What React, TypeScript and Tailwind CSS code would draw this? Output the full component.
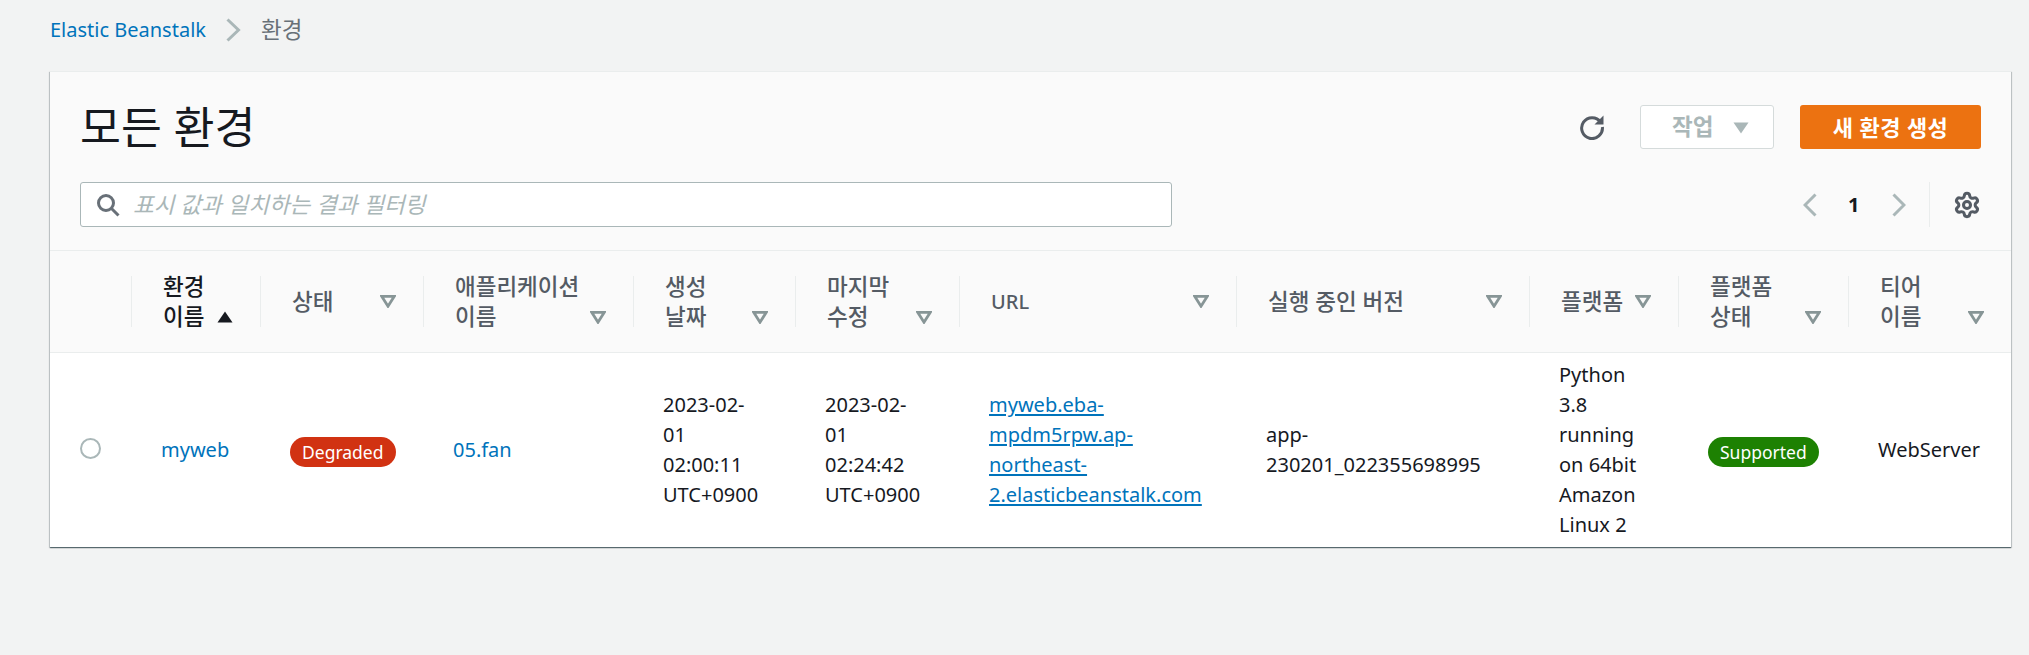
import React from "react";
import { Settings } from "lucide-react";

const FONT = "font-['Noto_Sans','Noto_Sans_CJK_KR',sans-serif]";

function FilterCaret() {
  return (
    <svg width="16" height="13" viewBox="0 0 16 13" className="shrink-0">
      <path d="M1.8 1.4H14.2L8 11.2Z" fill="none" stroke="#879596" strokeWidth="2.8" strokeLinejoin="miter" />
    </svg>
  );
}

function SortCaret() {
  return (
    <svg width="16" height="12" viewBox="0 0 16 12" className="shrink-0">
      <path d="M8 0.5L15.5 11.5H0.5Z" fill="#16191f" />
    </svg>
  );
}

type Col = { label: string; active?: boolean };

const cols: Col[] = [
  { label: "환경\n이름", active: true },
  { label: "상태" },
  { label: "애플리케이션\n이름" },
  { label: "생성\n날짜" },
  { label: "마지막\n수정" },
  { label: "URL" },
  { label: "실행 중인 버전" },
  { label: "플랫폼" },
  { label: "플랫폼\n상태" },
  { label: "티어\n이름" },
];

const GRID = "grid grid-cols-[81px_129px_163px_210px_162px_164px_277px_293px_149px_170px_163px]";

function HeaderCell({ label, active }: Col) {
  const two = label.includes("\n");
  const size = label === "URL" ? "text-[20px]" : "text-[22.5px]";
  return (
    <div className="flex items-center h-[51px] border-l border-[#eaeded] pl-[31px] pr-[27px] justify-between">
      <div
        className={`whitespace-pre-line leading-[30px] font-medium ${size} ${
          active ? "text-[#16191f] font-bold" : "text-[#545b64]"
        }`}
      >
        {label}
      </div>
      <div className={two ? "mt-[31px]" : "mb-[1px]"}>{active ? <SortCaret /> : <FilterCaret />}</div>
    </div>
  );
}

function Badge({ color, children }: { color: string; children: React.ReactNode }) {
  return (
    <span className={`inline-flex items-center justify-center h-[30px] rounded-full px-[12px] text-[17.5px] text-white mt-[3px] ${color}`}>
      {children}
    </span>
  );
}

function Cell({ children }: { children: React.ReactNode }) {
  return <div className="flex items-center pl-[30px] pr-[30px] min-w-0">{children}</div>;
}

export default function App() {
  return (
    <div className={`${FONT} min-h-screen bg-[#f2f3f3] text-[20px] leading-[30px] text-[#16191f]`}>
      <nav className="h-[71px] pl-[50px] pt-[15px] flex items-start">
        <a className="text-[#0073bb]">Elastic Beanstalk</a>
        <svg width="16" height="24" viewBox="0 0 16 24" className="ml-[19px] mr-[20px] mt-[3px]">
          <path d="M2.5 1.5L13.5 12L2.5 22.5" fill="none" stroke="#aab7b8" strokeWidth="3" />
        </svg>
        <span className="text-[#687078] text-[22.5px]">환경</span>
      </nav>

      <section className="ml-[50px] w-[1961px] bg-white shadow-[0_1px_1px_0_rgba(0,28,36,0.5),1px_1px_1px_0_rgba(0,28,36,0.15),-1px_1px_1px_0_rgba(0,28,36,0.15)]">
        <header className="h-[180px] bg-[#fafafa] border-t border-b border-[#eaeded] pt-[33px] pl-[30px] pr-[30px]">
          <div className="flex items-center h-[44px]">
            <h1 className="text-[44.5px] leading-[44px] font-normal">모든 환경</h1>
            <div className="ml-auto flex items-center">
              <svg width="26" height="26" viewBox="0 0 26 26" className="mr-[35px]">
                <path d="M21.6 8.2A10.4 10.4 0 1 0 23.4 13" fill="none" stroke="#545b64" strokeWidth="3" />
                <path d="M24.5 1.5V10.5H15.5Z" fill="#545b64" />
              </svg>
              <button className="flex items-center h-[44px] w-[134px] bg-white border border-[#d5dbdb] rounded-[3px] pl-[31px] font-bold text-[22.5px] text-[#aab7b8]">
                작업
                <svg width="16" height="12" viewBox="0 0 16 12" className="ml-[20px] mt-[2px]">
                  <path d="M0.5 0.5H15.5L8 11.5Z" fill="#aab7b8" />
                </svg>
              </button>
              <button className="ml-[26px] h-[44px] w-[181px] bg-[#ec7211] rounded-[3px] font-bold text-[22px] text-white tracking-[0.4px]">
                새 환경 생성
              </button>
            </div>
          </div>
          <div className="flex items-center h-[45px] mt-[33px]">
            <div className="flex items-center w-[1092px] h-[45px] bg-white border border-[#aab7b8] rounded-[3px] pl-[15px]">
              <svg width="24" height="24" viewBox="0 0 24 24" className="shrink-0">
                <circle cx="10" cy="10" r="7.5" fill="none" stroke="#687078" strokeWidth="3" />
                <path d="M15.5 15.5L22.5 22.5" stroke="#687078" strokeWidth="3" />
              </svg>
              <span className="ml-[13px] italic text-[22.5px] text-[#aab7b8]">표시 값과 일치하는 결과 필터링</span>
            </div>
            <div className="ml-auto flex items-center">
              <svg width="14" height="24" viewBox="0 0 14 24">
                <path d="M12.5 1.5L2 12L12.5 22.5" fill="none" stroke="#aab7b8" strokeWidth="3" />
              </svg>
              <span className="w-[9px] ml-[31px] font-bold leading-[30px] text-[20px]">1</span>
              <svg width="14" height="24" viewBox="0 0 14 24" className="ml-[35px]">
                <path d="M1.5 1.5L12 12L1.5 22.5" fill="none" stroke="#aab7b8" strokeWidth="3" />
              </svg>
              <div className="ml-[23px] h-[45px] border-l border-[#eaeded] pl-[23px] flex items-center">
                <Settings size={28} strokeWidth={2.6} color="#545b64" />
              </div>
            </div>
          </div>
        </header>

        <div className={`${GRID} h-[102px] items-center bg-[#fafafa] border-b border-[#eaeded]`}>
          <div />
          {cols.map((c) => (
            <HeaderCell key={c.label} {...c} />
          ))}
        </div>

        <div className={`${GRID} h-[194px]`}>
          <div className="flex items-center pl-[30px]">
            <span className="block w-[21px] h-[21px] rounded-full border-2 border-[#aab7b8] bg-white -mt-[3px]" />
          </div>
          <Cell>
            <a className="text-[#0073bb]">myweb</a>
          </Cell>
          <Cell>
            <Badge color="bg-[#d13212]">Degraded</Badge>
          </Cell>
          <Cell>
            <a className="text-[#0073bb]">05.fan</a>
          </Cell>
          <Cell>
            <span>2023-02-01 02:00:11 UTC+0900</span>
          </Cell>
          <Cell>
            <span>2023-02-01 02:24:42 UTC+0900</span>
          </Cell>
          <Cell>
            <a className="text-[#0073bb] underline decoration-2 underline-offset-2">
              myweb.eba-mpdm5rpw.ap-northeast-2.elasticbeanstalk.com
            </a>
          </Cell>
          <Cell>
            <span>app-230201_022355698995</span>
          </Cell>
          <Cell>
            <span>Python 3.8 running on 64bit Amazon Linux 2</span>
          </Cell>
          <Cell>
            <Badge color="bg-[#1d8102]">Supported</Badge>
          </Cell>
          <Cell>
            <span>WebServer</span>
          </Cell>
        </div>
      </section>
    </div>
  );
}
